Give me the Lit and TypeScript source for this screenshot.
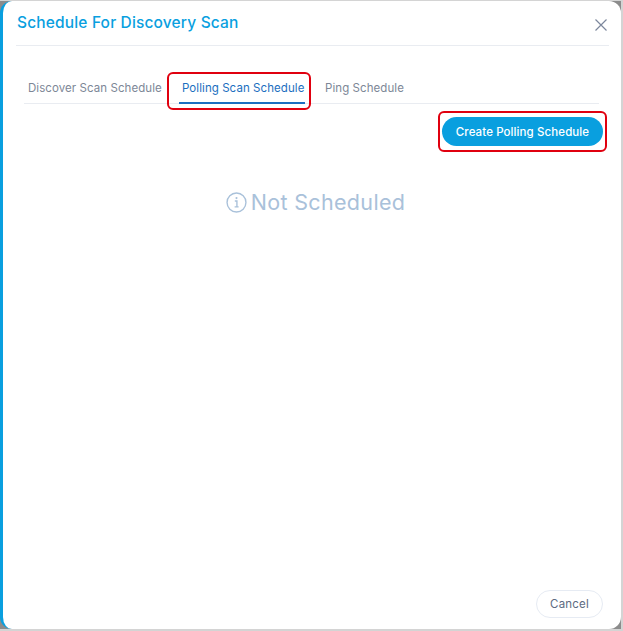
import { LitElement, css, html } from "lit";
import { customElement, state } from "lit/decorators.js";

const TABS = ["Discover Scan Schedule", "Polling Scan Schedule", "Ping Schedule"];

@customElement("app-root")
export class AppRoot extends LitElement {
    static styles = css`
        :host {
            display: block;
            width: 623px;
            height: 631px;
            box-sizing: border-box;
            background: #d4d4d4;
            padding: 1px 2px 2px 0;
            font-family: Inter, "Noto Sans", sans-serif;
        }

        .back {
            height: 100%;
            background: #8c8c8c;
            overflow: hidden;
        }

        .dialog {
            height: 100%;
            box-sizing: border-box;
            background: #ffffff;
            border-left: 3px solid #099fdf;
            border-radius: 12px;
            padding: 0 12px 11px 13px;
            display: flex;
            flex-direction: column;
        }

        .header {
            height: 44px;
            flex: none;
            display: flex;
            align-items: center;
            justify-content: space-between;
            border-bottom: 1px solid #e9ecf1;
            padding-left: 1px;
            padding-right: 1px;
        }

        .title {
            font-size: 15.5px;
            font-weight: 500;
            letter-spacing: 0.16px;
            color: #099fdf;
            margin-top: -2px;
        }

        .close {
            width: 14px;
            height: 14px;
            display: block;
            margin-top: 3px;
        }

        .tabs {
            flex: none;
            margin: 26px 10px 0 8px;
            height: 31px;
            display: flex;
            border-bottom: 1px solid #e9ecf1;
            font-size: 11.5px;
            letter-spacing: 0.07px;
            color: #7d8797;
        }

        .tab {
            position: relative;
            box-sizing: border-box;
            padding: 0 0 0 4px;
            margin-right: 17px;
            height: 32px;
            line-height: 32px;
            white-space: nowrap;
        }

        .tab.active {
            color: #1c6fc0;
            margin-right: 16px;
            padding-left: 3px;
            border-bottom: 2px solid #1c6fc0;
        }

        .tab:nth-child(2) {
            width: 126px;
        }

        .tab:first-child {
            width: 138px;
        }

        .tab.active::after {
            content: "";
            position: absolute;
            left: -12px;
            right: -6px;
            top: 0;
            bottom: -8px;
            border: 2px solid #e0000f;
            border-radius: 6px;
        }

        .actions {
            flex: none;
            display: flex;
            justify-content: flex-end;
            margin-top: 13px;
            padding-right: 6px;
        }

        .create {
            position: relative;
            width: 161px;
            height: 29px;
            border: none;
            border-radius: 15px;
            background: #099fdf;
            color: #ffffff;
            font: 500 11.5px Inter, "Noto Sans", sans-serif;
            letter-spacing: 0.1px;
            padding: 0;
        }

        .create::after {
            content: "";
            position: absolute;
            inset: -6px -4px -6px -4px;
            border: 2px solid #e0000f;
            border-radius: 6px;
        }

        .empty {
            flex: none;
            margin-top: 41px;
            display: flex;
            justify-content: center;
            align-items: center;
            gap: 4px;
            padding-left: 6px;
            height: 30px;
            font-size: 21.5px;
            font-weight: 400;
            letter-spacing: 0.34px;
            color: #a9c1da;
        }

        .empty svg {
            width: 21px;
            height: 21px;
            display: block;
        }

        .footer {
            margin-top: auto;
            display: flex;
            justify-content: flex-end;
            padding-right: 6px;
        }

        .cancel {
            width: 67px;
            height: 28px;
            box-sizing: border-box;
            border: 1px solid #e6ebf3;
            border-radius: 14px;
            background: #ffffff;
            color: #5d6b82;
            font: 400 11.5px Inter, "Noto Sans", sans-serif;
            letter-spacing: 0.2px;
            padding: 0;
        }
    `;

    @state() active = 1;

    render() {
        return html`
            <div class="back">
                <div class="dialog">
                    <div class="header">
                        <span class="title">Schedule For Discovery Scan</span>
                        <svg class="close" viewBox="0 0 14 14" fill="none" stroke="#7c879c" stroke-width="1.2">
                            <path d="M1.5 1.5l11 11M12.5 1.5l-11 11" />
                        </svg>
                    </div>
                    <div class="tabs">
                        ${TABS.map(
                            (t, i) => html`<div class="tab ${i === this.active ? "active" : ""}">${t}</div>`
                        )}
                    </div>
                    <div class="actions">
                        <button class="create">Create Polling Schedule</button>
                    </div>
                    <div class="empty">
                        <svg viewBox="0 0 20 20" fill="none" stroke="#a9c1da">
                            <circle cx="10" cy="10" r="9" stroke-width="1.3" />
                            <path d="M8.4 8.6h2v5.4M8.2 14.2h3.8" stroke-width="1.3" />
                            <circle cx="10" cy="5.8" r="1" fill="#a9c1da" stroke="none" />
                        </svg>
                        <span>Not Scheduled</span>
                    </div>
                    <div class="footer">
                        <button class="cancel">Cancel</button>
                    </div>
                </div>
            </div>
        `;
    }
}
